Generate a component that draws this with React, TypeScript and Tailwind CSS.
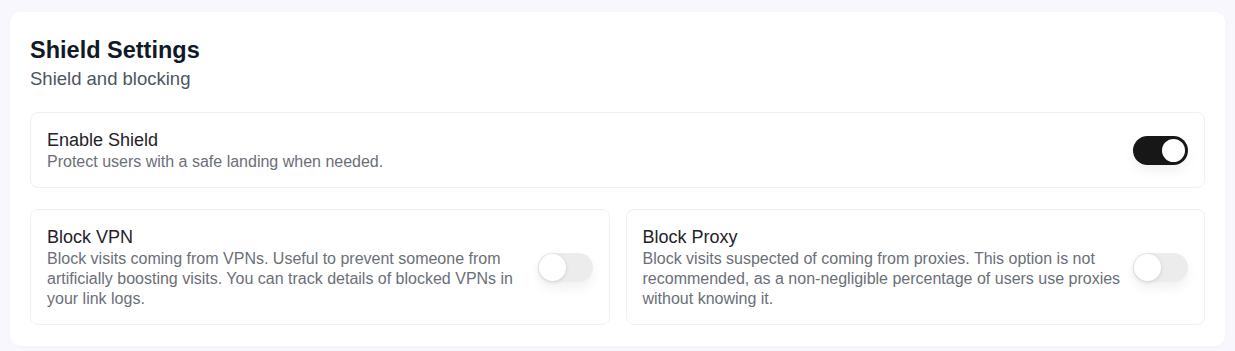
import { useState } from "react";

type ToggleProps = {
  checked: boolean;
  onChange: (v: boolean) => void;
};

function Toggle({ checked, onChange }: ToggleProps) {
  return (
    <button
      type="button"
      role="switch"
      aria-checked={checked}
      onClick={() => onChange(!checked)}
      className={`relative flex h-[29px] w-[55px] shrink-0 items-center rounded-full shadow-[0_6px_12px_rgba(0,0,0,0.06)] transition-colors ${
        checked ? "bg-[#171717]" : "bg-[#ececec]"
      }`}
    >
      <span
        className={`absolute top-[1px] h-[27px] w-[27px] rounded-full bg-white transition-all ${
          checked
            ? "left-[27px] border-2 border-[#171717]"
            : "left-[1px] shadow-[0_1px_4px_rgba(0,0,0,0.12)]"
        }`}
      />
    </button>
  );
}

type SettingProps = {
  title: string;
  description: string;
  checked: boolean;
  onChange: (v: boolean) => void;
};

function SettingRow({ title, description, checked, onChange }: SettingProps) {
  return (
    <div className="flex items-center gap-3 rounded-lg border border-[#f0f0f2] bg-white px-4 py-[15px]">
      <div className="flex-1">
        <div className="text-[18px] leading-6 text-[#1f2229]">{title}</div>
        <p className="text-[16px] leading-5 text-[#6b6f78]">{description}</p>
      </div>
      <Toggle checked={checked} onChange={onChange} />
    </div>
  );
}

export default function App() {
  const [shield, setShield] = useState(true);
  const [vpn, setVpn] = useState(false);
  const [proxy, setProxy] = useState(false);

  return (
    <div
      className="min-h-screen bg-[#f9f7fe] px-[10px] pt-3"
      style={{ fontFamily: '"Liberation Sans", Arial, sans-serif' }}
    >
      <div className="rounded-[10px] bg-white px-5 pt-[22px] pb-[21px] shadow-[0_1px_3px_rgba(60,40,120,0.04)]">
        <h1 className="text-[23.5px] leading-8 font-bold text-[#111827]">
          Shield Settings
        </h1>
        <p className="mt-[1px] text-[18.5px] leading-6 text-[#4b5563]">
          Shield and blocking
        </p>

        <div className="mt-[21px] flex flex-col gap-[21px]">
          <SettingRow
            title="Enable Shield"
            description="Protect users with a safe landing when needed."
            checked={shield}
            onChange={setShield}
          />
          <div className="grid grid-cols-2 gap-4">
            <SettingRow
              title="Block VPN"
              description="Block visits coming from VPNs. Useful to prevent someone from artificially boosting visits. You can track details of blocked VPNs in your link logs."
              checked={vpn}
              onChange={setVpn}
            />
            <SettingRow
              title="Block Proxy"
              description="Block visits suspected of coming from proxies. This option is not recommended, as a non-negligible percentage of users use proxies without knowing it."
              checked={proxy}
              onChange={setProxy}
            />
          </div>
        </div>
      </div>
    </div>
  );
}
